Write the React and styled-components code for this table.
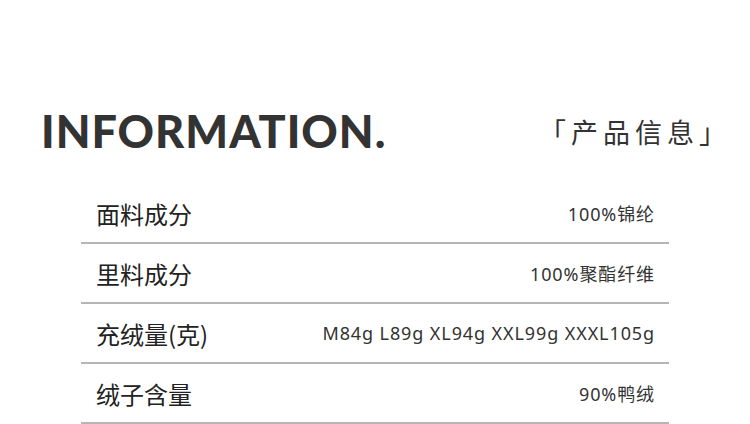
import React from "react";
import styled, { createGlobalStyle } from "styled-components";

const GlobalStyle = createGlobalStyle`
  html, body {
    margin: 0;
    padding: 0;
    background: #ffffff;
  }
  body {
    font-family: "Noto Sans CJK SC", "Noto Sans", sans-serif;
  }
`;

const rows = [
  { label: "面料成分", value: "100%锦纶" },
  { label: "里料成分", value: "100%聚酯纤维" },
  { label: "充绒量(克)", value: "M84g L89g XL94g XXL99g XXXL105g" },
  { label: "绒子含量", value: "90%鸭绒" },
];

const Page = styled.div`
  width: 750px;
  height: 424px;
  overflow: hidden;
  padding-top: 101px;
  box-sizing: border-box;
`;

const Header = styled.div`
  display: flex;
  align-items: center;
  justify-content: space-between;
  height: 60px;
  padding: 0 19px 0 41px;
`;

const Title = styled.h1`
  margin: 0;
  font-family: Lato, "Noto Sans", sans-serif;
  font-weight: 900;
  font-size: 45px;
  line-height: 1;
  color: #333333;
  letter-spacing: 1px;
`;

const Subtitle = styled.div`
  font-family: "Noto Sans CJK SC", sans-serif;
  font-size: 27px;
  color: #333333;
  letter-spacing: 5px;
`;

const Table = styled.div`
  margin: 23px 81px 0 81px;
  display: flex;
  flex-direction: column;
`;

const Row = styled.div`
  display: flex;
  align-items: center;
  justify-content: space-between;
  height: 58px;
  padding: 0 15px;
  border-bottom: 2px solid #b5b5b5;
`;

const Label = styled.span`
  font-size: 24px;
  color: #222222;
`;

const Value = styled.span`
  font-family: "Noto Sans", "Noto Sans CJK SC", sans-serif;
  font-size: 18px;
  letter-spacing: 0.9px;
  margin-right: -1px;
  color: #333333;
`;

export default function App() {
  return (
    <>
      <GlobalStyle />
      <Page>
        <Header>
          <Title>INFORMATION.</Title>
          <Subtitle>「产品信息」</Subtitle>
        </Header>
        <Table>
          {rows.map((row) => (
            <Row key={row.label}>
              <Label>{row.label}</Label>
              <Value>{row.value}</Value>
            </Row>
          ))}
        </Table>
      </Page>
    </>
  );
}
